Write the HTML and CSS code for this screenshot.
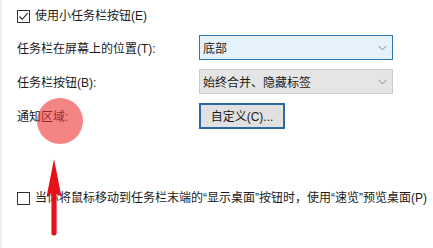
FILE: index.html
```html
<!DOCTYPE html>
<html lang="zh-CN">
<head>
<meta charset="utf-8">
<link rel="stylesheet" href="styles.css">
</head>
<body>
<div class="page">
  <label class="check-row first">
    <span class="box"><svg width="11" height="11" viewBox="0 0 11 11"><path d="M1.5 5.5 L4.3 8.3 L9.6 2.2" fill="none" stroke="#222" stroke-width="1.1"/></svg></span>
    <span class="text">使用小任务栏按钮(E)</span>
  </label>
  <div class="grid">
    <div class="label">任务栏在屏幕上的位置(T):</div>
    <div class="select active"><span>底部</span><svg class="chev" width="9" height="6" viewBox="0 0 9 6"><path d="M0.5 0.8 L4.5 4.8 L8.5 0.8" fill="none" stroke="#8a8a8a" stroke-width="1"/></svg></div>
    <div class="label">任务栏按钮(B):</div>
    <div class="select"><span>始终合并、隐藏标签</span><svg class="chev" width="9" height="6" viewBox="0 0 9 6"><path d="M0.5 0.8 L4.5 4.8 L8.5 0.8" fill="none" stroke="#8a8a8a" stroke-width="1"/></svg></div>
    <div class="label">通知区域:</div>
    <div><button class="btn">自定义(C)...</button></div>
  </div>
  <label class="check-row last">
    <span class="box"></span>
    <span class="text">当你将鼠标移动到任务栏末端的“显示桌面”按钮时，使用“速览”预览桌面(P)</span>
  </label>
  <div class="circle"></div>
  <svg class="arrow" width="20" height="84" viewBox="0 0 20 84"><path d="M10 2 L17.5 40 L12.6 36.5 L12.6 76 Q12.6 78.5 10 78.5 Q7.4 78.5 7.4 76 L7.4 36.5 L2.5 40 Z" fill="#e5121c"/></svg>
</div>
</body>
</html>
```
FILE: styles.css
```css
html, body {
  margin: 0;
  padding: 0;
  background: #fff;
}
body {
  width: 433px;
  height: 248px;
  overflow: hidden;
  font-family: "Liberation Sans", "Noto Sans CJK SC", sans-serif;
  font-size: 12px;
  color: #1a1a1a;
}
.page {
  position: relative;
  height: 248px;
  box-sizing: border-box;
  padding: 10px 0 0 17px;
  border-left: 2px solid #f0f0f0;
  margin-left: 0;
}
.check-row {
  display: flex;
  align-items: center;
  gap: 5px;
  height: 13px;
  line-height: 13px;
  white-space: nowrap;
}
.check-row.first { margin-left: -2px; }
.check-row.last { margin-left: -2px; margin-top: 64px; }
.box {
  width: 11px;
  height: 11px;
  border: 1px solid #333;
  background: #fff;
  display: flex;
  flex: none;
}
.grid {
  display: grid;
  grid-template-columns: 182px 194px;
  grid-auto-rows: 25px;
  row-gap: 9px;
  margin-top: 12px;
  margin-left: -2px;
  align-items: center;
}
.label {
  white-space: nowrap;
}
.select {
  height: 25px;
  box-sizing: border-box;
  border: 1px solid #cccccc;
  background: #e5e5e5;
  display: flex;
  align-items: center;
  justify-content: space-between;
  padding: 0 4px 0 3px;
}
.select.active {
  background: #e5f1fb;
  border-color: #2f77b5;
}
.chev { margin-right: 1px; }
.btn {
  width: 86px;
  height: 26px;
  box-sizing: border-box;
  border: 2px solid #2a6aa6;
  background: #e1e1e1;
  font: inherit;
  color: #1a1a1a;
  padding: 0;
  display: block;
}
.circle {
  position: absolute;
  left: 35px;
  top: 98px;
  width: 46px;
  height: 46px;
  border-radius: 50%;
  background: rgba(238, 50, 50, 0.6);
}
.arrow {
  position: absolute;
  left: 42px;
  top: 157px;
}
```
